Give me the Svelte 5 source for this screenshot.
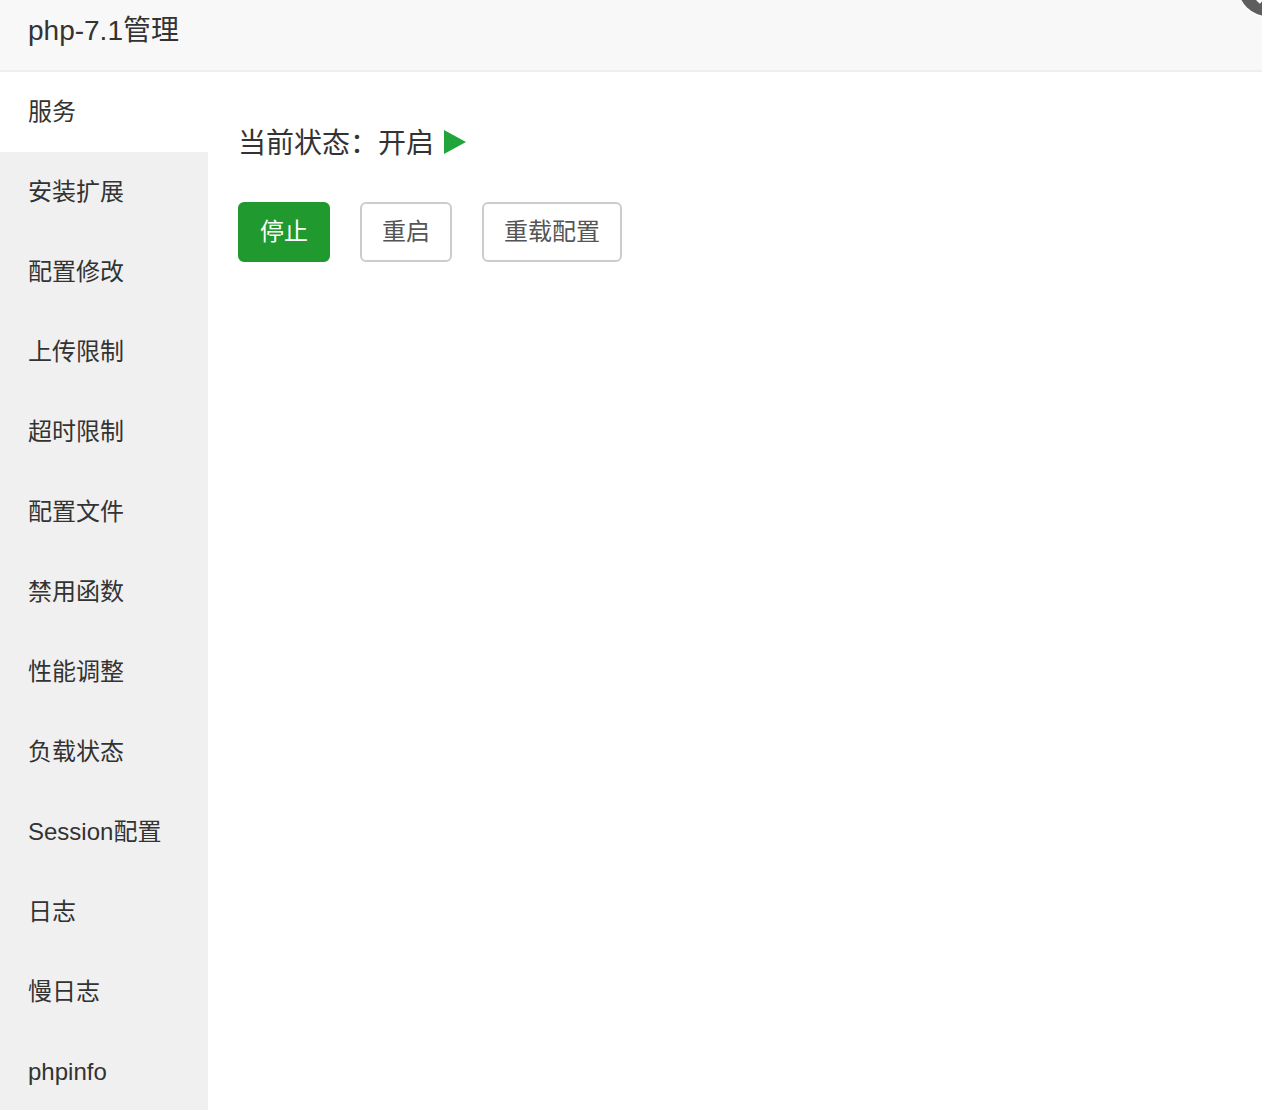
<script>
  const tabs = ["服务", "安装扩展", "配置修改", "上传限制", "超时限制", "配置文件", "禁用函数", "性能调整", "负载状态", "Session配置", "日志", "慢日志", "phpinfo"];
  let active = $state(0);
</script>

<div class="layer">
  <div class="title">php-7.1管理</div>
  <button class="close" aria-label="关闭">
    <svg viewBox="0 0 60 60" width="60" height="60">
      <circle cx="30" cy="30" r="30" fill="#5e5e5e" />
      <path d="M20 46 L46 20 M20 20 L46 46" stroke="#fff" stroke-width="5" />
    </svg>
  </button>
  <div class="content">
    <nav class="side">
      {#each tabs as tab, i}
        <button class="tab" class:on={active === i} onclick={() => (active = i)}>{tab}</button>
      {/each}
    </nav>
    <main class="main">
      <p class="status">
        <span>当前状态：</span><span>开启</span>
        <svg class="play" viewBox="0 0 22 24" width="22" height="24"><path d="M0 0 L22 12 L0 24 Z" fill="#20a53a" /></svg>
      </p>
      <div class="actions">
        <button class="btn primary">停止</button>
        <button class="btn">重启</button>
        <button class="btn">重载配置</button>
      </div>
    </main>
  </div>
</div>

<style>
  :global(body) {
    margin: 0;
    overflow: hidden;
  }
  .layer {
    position: relative;
    width: 1262px;
    height: 1110px;
    overflow: hidden;
    background: #fff;
    color: #333;
    font-family: "Liberation Sans", "Noto Sans CJK SC", sans-serif;
  }
  .title {
    height: 70px;
    line-height: 62px;
    padding-left: 28px;
    font-size: 28px;
    background: #f8f8f8;
    border-bottom: 2px solid #eee;
  }
  .close {
    position: absolute;
    top: -44px;
    right: -36px;
    padding: 0;
    border: 0;
    border-radius: 50%;
    background: none;
    box-shadow: 0 0 4px #fff;
    line-height: 0;
  }
  .content {
    display: flex;
    height: 1038px;
  }
  .side {
    display: flex;
    flex-direction: column;
    width: 208px;
    flex: none;
    background: #f0f0f0;
  }
  .tab {
    flex: none;
    height: 80px;
    padding: 0 0 0 28px;
    border: 0;
    background: none;
    text-align: left;
    font: inherit;
    font-size: 24px;
    line-height: 80px;
    color: #333;
  }
  .tab.on {
    background: #fff;
  }
  .main {
    flex: 1;
    padding: 50px 30px 0;
  }
  .status {
    display: flex;
    align-items: center;
    margin: 0;
    height: 40px;
    line-height: 40px;
    font-size: 28px;
  }
  .status span {
    padding-top: 4px;
  }
  .play {
    margin-left: 10px;
  }
  .actions {
    display: flex;
    gap: 30px;
    margin-top: 40px;
  }
  .btn {
    height: 60px;
    padding: 0 20px;
    border: 2px solid #ccc;
    border-radius: 6px;
    background: #fff;
    font: inherit;
    font-size: 24px;
    line-height: 56px;
    color: #555;
  }
  .btn.primary {
    background: #20992e;
    border-color: #20992e;
    color: #fff;
  }
</style>
